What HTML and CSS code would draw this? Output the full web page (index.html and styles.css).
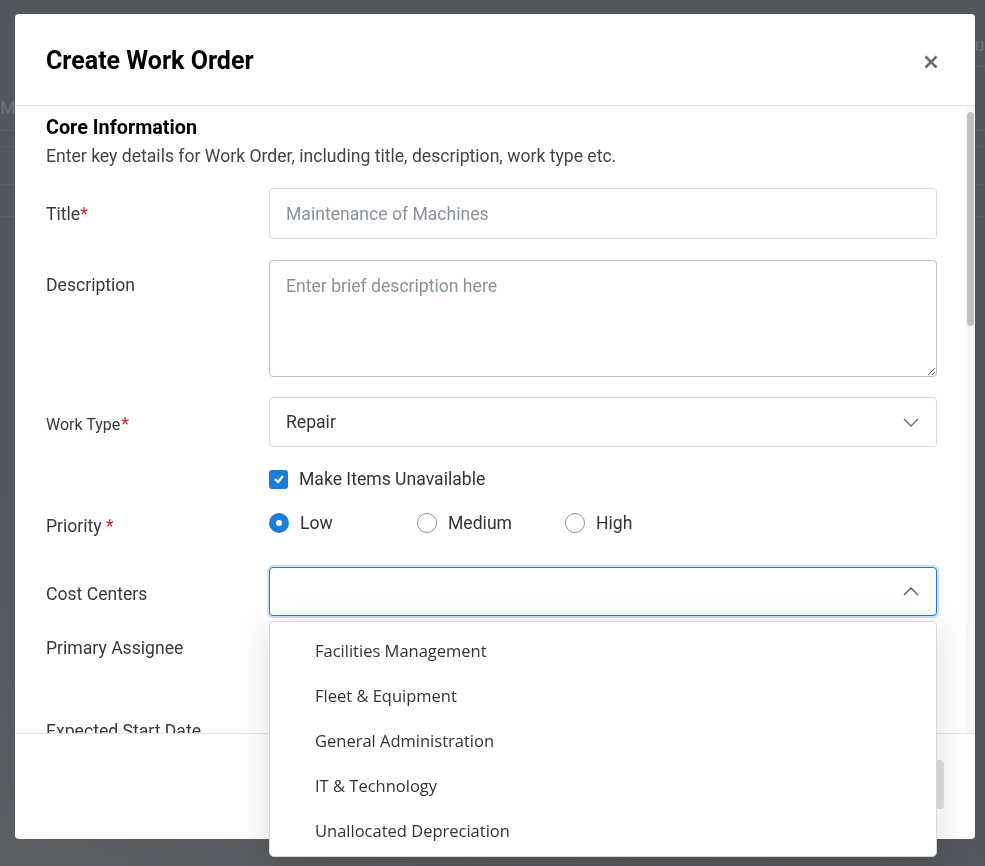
FILE: index.html
```html
<!DOCTYPE html>
<html lang="en">
<head>
    <meta charset="UTF-8">
    <meta name="viewport" content="width=device-width, initial-scale=1.0">
    <title>Create Work Order</title>
    <link rel="stylesheet" href="styles.css">
</head>
<body>
    <!-- page behind the dialog -->
    <div class="page">
        <div class="page-head"><span>Equipment</span></div>
        <div class="page-tabs"><span>My Work Orders</span></div>
        <div class="page-row"></div>
        <div class="page-row tall"></div>
        <div class="page-row"></div>
    </div>

    <div class="backdrop">
        <div class="modal">
            <div class="modal-header">
                <h2 class="modal-title">Create Work Order</h2>
                <button class="close-btn" type="button" aria-label="Close">
                    <svg width="14" height="14" viewBox="0 0 14 14">
                        <path d="M1.5 1.5 L12.5 12.5 M12.5 1.5 L1.5 12.5" stroke="#6b6b6b" stroke-width="2.6" fill="none"/>
                    </svg>
                </button>
            </div>

            <div class="body-wrap">
                <div class="modal-body">
                    <h3 class="section-title">Core Information</h3>
                    <p class="section-sub">Enter key details for Work Order, including title, description, work type etc.</p>

                    <div class="form-row row-title">
                        <label class="field-label" for="woTitle">Title<span class="req">*</span></label>
                        <input class="field-input" id="woTitle" type="text" placeholder="Maintenance of Machines">
                    </div>

                    <div class="form-row row-desc">
                        <label class="field-label" for="woDesc">Description</label>
                        <textarea class="field-input field-area" id="woDesc" placeholder="Enter brief description here"></textarea>
                    </div>

                    <div class="form-row row-type">
                        <label class="field-label small">Work Type<span class="req">*</span></label>
                        <div class="field-input field-select">
                            <span>Repair</span>
                            <svg class="chevron" width="16" height="9" viewBox="0 0 16 9">
                                <path d="M1 1 L8 8 L15 1" stroke="#666" stroke-width="1.3" fill="none"/>
                            </svg>
                        </div>
                    </div>

                    <div class="form-row row-check">
                        <span class="field-label"></span>
                        <label class="check">
                            <span class="check-box">
                                <svg width="12" height="10" viewBox="0 0 12 10">
                                    <path d="M2 5 L5 8 L10 2" stroke="#fff" stroke-width="2.2" fill="none"/>
                                </svg>
                            </span>
                            Make Items Unavailable
                        </label>
                    </div>

                    <div class="form-row row-priority">
                        <span class="field-label">Priority <span class="req">*</span></span>
                        <div class="radios">
                            <label class="radio"><span class="radio-dot on"></span>Low</label>
                            <label class="radio"><span class="radio-dot"></span>Medium</label>
                            <label class="radio"><span class="radio-dot"></span>High</label>
                        </div>
                    </div>

                    <div class="form-row row-cost">
                        <span class="field-label">Cost Centers</span>
                        <div class="field-input field-select focused">
                            <span></span>
                            <svg class="chevron" width="16" height="9" viewBox="0 0 16 9">
                                <path d="M1 8 L8 1 L15 8" stroke="#555" stroke-width="1.3" fill="none"/>
                            </svg>
                        </div>
                    </div>

                    <div class="form-row row-assignee">
                        <span class="field-label">Primary Assignee</span>
                        <div class="field-input field-select"><span></span></div>
                    </div>

                    <div class="form-row">
                        <span class="field-label">Expected Start Date</span>
                        <div class="field-input field-select"><span></span></div>
                    </div>
                </div>

                <div class="scrollbar"><div class="scroll-thumb"></div></div>
            </div>

            <div class="modal-footer">
                <button class="btn btn-outline" type="button">Cancel</button>
                <button class="btn btn-muted" type="button">Create</button>
            </div>
        </div>

        <ul class="dropdown">
            <li>Facilities Management</li>
            <li>Fleet &amp; Equipment</li>
            <li>General Administration</li>
            <li>IT &amp; Technology</li>
            <li>Unallocated Depreciation</li>
        </ul>
    </div>
</body>
</html>
```

FILE: styles.css
```css
* {
    margin: 0;
    padding: 0;
    box-sizing: border-box;
}

body {
    font-family: Roboto, "Liberation Sans", Arial, sans-serif;
    background: linear-gradient(20deg, #5b5f64 0%, #53585e 30%, #52575e 100%);
    color: #333;
    width: 985px;
    height: 866px;
    overflow: hidden;
}

/* page behind the dialog, already dimmed */
.page {
    width: 1040px;
}

.page-head {
    height: 67px;
    margin-left: 40px;
    border-bottom: 1px solid #5d6268;
    display: flex;
    justify-content: flex-end;
    align-items: flex-end;
    padding: 0 0 11px;
    font-size: 18px;
    color: #6d7279;
}

.page-tabs {
    height: 64px;
    border-bottom: 1px solid #5f646a;
    display: flex;
    align-items: flex-end;
    padding-bottom: 12px;
    font-size: 18px;
    color: #6d737a;
}

.page-row {
    height: 16px;
    border-bottom: 1px solid #5a5f65;
}

.page-row.tall {
    height: 38px;
}

.page-row + .page-row + .page-row {
    height: 32px;
}

.backdrop {
    position: fixed;
    inset: 0;
    padding: 14px 0 0 15px;
}

.modal {
    width: 960px;
    height: 825px;
    background: #fff;
    border-radius: 4px;
    display: flex;
    flex-direction: column;
    overflow: hidden;
}

.modal-header {
    height: 92px;
    flex: none;
    border-bottom: 1px solid #e3e3e3;
    display: flex;
    align-items: center;
    justify-content: space-between;
    padding: 0 37px 0 31px;
}

.modal-title {
    font-size: 25px;
    font-weight: 700;
    color: #000;
    margin-top: 2px;
}

.close-btn {
    background: none;
    border: none;
    display: flex;
    margin-top: 5px;
}

.body-wrap {
    flex: 1;
    display: flex;
    min-height: 0;
}

.modal-body {
    flex: 1;
    overflow: hidden;
    padding: 10px 29px 0 31px;
}

.scrollbar {
    width: 9px;
    flex: none;
    background: #f6f7f8;
    padding: 6px 1px 0 1px;
}

.scroll-thumb {
    height: 214px;
    background: #c1c1c1;
    border-radius: 4px;
}

.section-title {
    font-size: 19.8px;
    font-weight: 700;
    color: #000;
    line-height: 24px;
}

.section-sub {
    font-size: 17.6px;
    color: #444;
    line-height: 24px;
    margin-top: 4px;
}

.form-row {
    display: flex;
    align-items: flex-start;
    margin-top: 20px;
}

.row-title .field-label {
    padding-top: 1px;
}

.row-title .field-input {
    height: 51px;
}

.row-desc {
    margin-top: 21px;
}

.field-label {
    width: 223px;
    flex: none;
    font-size: 17.6px;
    line-height: 50px;
    color: #383838;
}

.field-label.small {
    font-size: 16px;
    line-height: 47px;
    padding-top: 3px;
}

.req {
    color: #c1272d;
}

.field-label.small .req {
    font-size: 18px;
    margin-left: 1px;
}

.field-input {
    flex: 1;
    height: 51px;
    border: 1px solid #dadada;
    border-radius: 4px;
    padding: 0 16px;
    font-family: inherit;
    font-size: 17.6px;
    color: #333;
    outline: none;
    background: #fff;
}

.field-input::placeholder {
    color: #88929b;
}

.field-area {
    height: 117px;
    padding-top: 13px;
    resize: vertical;
    border-color: #b9c0c7;
    line-height: 24px;
}

.row-type .field-input {
    height: 50px;
}

.field-select {
    display: flex;
    align-items: center;
    justify-content: space-between;
    padding-right: 17px;
}

.field-select.focused {
    height: 49px;
    border-color: #1c7ed6;
    box-shadow: 0 0 0 2px rgba(28, 126, 214, 0.22);
}

.row-check {
    margin-top: 19px;
}

.row-check .field-label {
    line-height: 24px;
}

.check {
    display: flex;
    align-items: center;
    gap: 11px;
    font-size: 17.6px;
    line-height: 24px;
    color: #333;
}

.check-box {
    width: 19px;
    height: 19px;
    border-radius: 3px;
    background: #1a7fd9;
    display: flex;
    align-items: center;
    justify-content: center;
}

.row-priority {
    margin-top: 19px;
}

.row-priority .field-label {
    line-height: 26px;
    padding-top: 3px;
}

.radios {
    display: flex;
}

.radio {
    width: 148px;
    display: flex;
    align-items: center;
    gap: 11px;
    font-size: 17.6px;
    line-height: 26px;
    color: #333;
}

.radio:last-child {
    width: auto;
}

.radio-dot {
    width: 20px;
    height: 20px;
    border-radius: 50%;
    border: 1px solid #8a939c;
    flex: none;
}

.radio-dot.on {
    border: 7px solid #1a7fd9;
    background: #fff;
}

.row-cost {
    margin-top: 28px;
}

.row-cost .field-label {
    line-height: 54px;
}

.row-assignee {
    margin-top: 2px;
}

.row-assignee .field-input {
    height: 64px;
}

.row-assignee + .form-row {
    margin-top: 19px;
}

.modal-footer {
    height: 106px;
    flex: none;
    border-top: 1px solid #e3e3e3;
    display: flex;
    justify-content: flex-end;
    align-items: center;
    gap: 12px;
    padding: 0 31px 4px 0;
}

.btn {
    height: 49px;
    padding: 0 28px;
    border-radius: 4px;
    font-family: inherit;
    font-size: 17.6px;
}

.btn-outline {
    background: #fff;
    border: 1px solid #1a7fd9;
    color: #1a7fd9;
}

.btn-muted {
    background: #e2e2e2;
    border: none;
    color: #999;
}

.dropdown {
    position: absolute;
    left: 269px;
    top: 621px;
    width: 668px;
    height: 236px;
    list-style: none;
    background: #fff;
    border: 1px solid #d8d8d8;
    border-radius: 5px;
    box-shadow: 0 6px 32px rgba(0, 0, 0, 0.14);
    padding-top: 6px;
}

.dropdown li {
    height: 45px;
    line-height: 45px;
    padding-left: 45px;
    font-family: "Open Sans", "Noto Sans", sans-serif;
    font-size: 16.5px;
    color: #333;
}
```
